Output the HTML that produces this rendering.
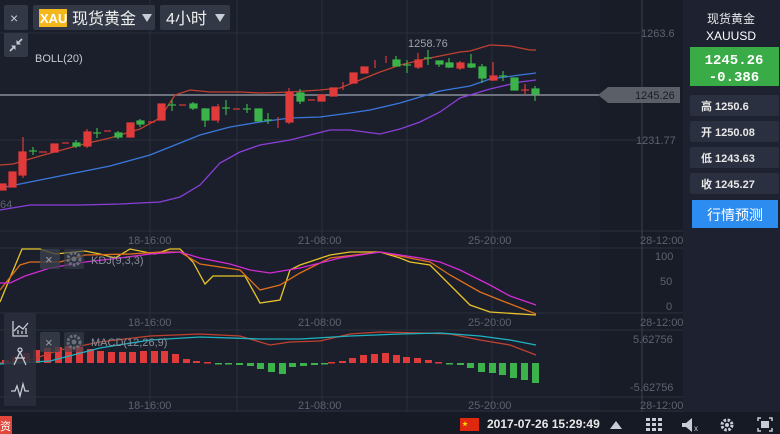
<!DOCTYPE html>
<html><head><meta charset="utf-8"><style>
*{margin:0;padding:0;box-sizing:border-box}
body{width:780px;height:434px;overflow:hidden;background:#1b1f2c;font-family:"Liberation Sans","Noto Sans CJK SC",sans-serif;position:relative}
.abs{position:absolute}
</style></head><body>
<svg class="abs" style="left:0;top:0" width="780" height="434">
<rect x="0" y="0" width="683" height="412" fill="#1b1f2c"/>
<rect x="600" y="0" width="83" height="412" fill="#181c27"/>
<rect x="683" y="0" width="97" height="412" fill="#1d2130"/>
<g stroke="#2a2f3c" stroke-width="1">
<line x1="150" y1="0" x2="150" y2="412"/><line x1="237" y1="0" x2="237" y2="412"/><line x1="322" y1="0" x2="322" y2="412"/><line x1="407" y1="0" x2="407" y2="412"/><line x1="492" y1="0" x2="492" y2="412"/>
<line x1="0" y1="33" x2="640" y2="33"/><line x1="0" y1="140" x2="640" y2="140"/>
<line x1="0" y1="231" x2="683" y2="231"/><line x1="0" y1="248" x2="683" y2="248"/>
<line x1="0" y1="313" x2="683" y2="313"/><line x1="0" y1="330" x2="683" y2="330"/>
<line x1="0" y1="397" x2="683" y2="397"/><line x1="0" y1="411" x2="683" y2="411"/>
</g>
<line x1="642" y1="0" x2="642" y2="412" stroke="#3a404e"/>
<line x1="0" y1="95" x2="605" y2="95" stroke="#8a8e96" stroke-width="1.5"/>
<polygon points="598,95 608,87 680,87 680,103 608,103" fill="#5b5f68"/>
<g font-size="11" fill="#5d6270" font-family="Liberation Sans">
<text x="641" y="37">1263.6</text><text x="636" y="144">1231.77</text>
<text x="655" y="260">100</text><text x="660" y="285">50</text><text x="666" y="310">0</text>
<text x="633" y="343">5.62756</text><text x="630" y="391">-5.62756</text>
<text x="128" y="244">18-16:00</text><text x="298" y="244">21-08:00</text><text x="468" y="244">25-20:00</text><text x="640" y="244">28-12:00</text>
<text x="128" y="326">18-16:00</text><text x="298" y="326">21-08:00</text><text x="468" y="326">25-20:00</text><text x="640" y="326">28-12:00</text>
<text x="128" y="409">18-16:00</text><text x="298" y="409">21-08:00</text><text x="468" y="409">25-20:00</text><text x="640" y="409">28-12:00</text>
<text x="0" y="208">64</text>
</g>
<text x="635" y="99" font-size="11" fill="#1a1d24">1245.26</text>
<text x="408" y="47" font-size="11" fill="#9ea2aa">1258.76</text>
<text x="35" y="62" font-size="11" fill="#c8cad0">BOLL(20)</text>
<polyline fill="none" stroke="#c0412f" stroke-width="1.3" points="0,165 13,164 40,156 80,145 110,138 140,129 160,118 175,95 190,90 210,92 240,92 260,93 290,92 320,90 340,88 360,80 380,72 400,65 430,58 460,52 470,51 490,45 510,46 530,50 536,50"/>
<polyline fill="none" stroke="#3a78dc" stroke-width="1.3" points="0,188 30,182 80,172 110,166 150,155 170,147 200,135 230,127 260,122 290,118 320,117 350,113 370,110 400,103 420,97 440,91 470,86 490,79 520,75 536,73"/>
<polyline fill="none" stroke="#8b3fd8" stroke-width="1.3" points="0,210 30,205 80,205 120,204 160,202 180,197 200,185 220,163 240,152 260,145 290,140 330,130 350,130 380,134 400,129 420,122 440,112 460,98 490,89 520,82 536,80"/>
<g stroke-width="1.2">
<g fill="#e03a3a" stroke="#e03a3a">
<rect x="0" y="184" width="6" height="6"/><rect x="9" y="172" width="7" height="15"/>
<line x1="23" y1="137" x2="23" y2="178"/><rect x="19" y="152" width="7" height="23"/>
<line x1="39" y1="152" x2="47" y2="152"/><rect x="51" y="144" width="7" height="8"/><line x1="62" y1="143" x2="69" y2="143"/>
<line x1="87" y1="129" x2="87" y2="148"/><rect x="84" y="132" width="7" height="14"/><line x1="104" y1="131" x2="111" y2="131"/><line x1="148" y1="122" x2="155" y2="122"/>
<rect x="127" y="123" width="7" height="14"/><rect x="158" y="104" width="7" height="16"/><line x1="179" y1="105" x2="186" y2="105"/>
<line x1="218" y1="104" x2="218" y2="123"/><rect x="212" y="107" width="7" height="13"/><line x1="233" y1="109" x2="240" y2="109"/>
<line x1="278" y1="117" x2="278" y2="128"/><line x1="289" y1="88" x2="289" y2="124"/><rect x="286" y="92" width="7" height="30"/>
<line x1="308" y1="100" x2="315" y2="100"/><rect x="318" y="95" width="7" height="6"/><rect x="330" y="88" width="7" height="8"/><line x1="343" y1="82" x2="343" y2="90"/>
<rect x="350" y="73" width="7" height="10"/><rect x="361" y="67" width="7" height="6"/><line x1="375" y1="60" x2="375" y2="68"/><line x1="386" y1="56" x2="386" y2="63"/>
<line x1="418" y1="53" x2="418" y2="69"/><rect x="415" y="60" width="7" height="7"/><line x1="460" y1="61" x2="460" y2="70"/><rect x="457" y="63" width="7" height="5"/>
<line x1="493" y1="62" x2="493" y2="81"/><rect x="490" y="76" width="7" height="4"/><line x1="525" y1="84" x2="525" y2="94"/><line x1="521" y1="90" x2="529" y2="90"/>
</g>
<g fill="#3cb34a" stroke="#3cb34a">
<line x1="33" y1="147" x2="33" y2="155"/><line x1="29" y1="151" x2="37" y2="151"/><line x1="76" y1="140" x2="76" y2="148"/><rect x="73" y="143" width="7" height="3"/>
<line x1="97" y1="128" x2="97" y2="138"/><line x1="93" y1="133" x2="101" y2="133"/><line x1="118" y1="131" x2="118" y2="139"/><rect x="115" y="133" width="7" height="4"/>
<line x1="140" y1="119" x2="140" y2="127"/><rect x="137" y="121" width="7" height="3"/><line x1="172" y1="100" x2="172" y2="111"/><line x1="168" y1="105" x2="176" y2="105"/>
<line x1="193" y1="102" x2="193" y2="110"/><rect x="190" y="104" width="7" height="4"/><line x1="205" y1="108" x2="205" y2="127"/><rect x="202" y="109" width="7" height="11"/>
<line x1="226" y1="100" x2="226" y2="115"/><line x1="222" y1="108" x2="230" y2="108"/><line x1="247" y1="104" x2="247" y2="113"/><line x1="243" y1="109" x2="251" y2="109"/>
<rect x="255" y="109" width="7" height="12"/><line x1="268" y1="113" x2="268" y2="124"/><line x1="264" y1="120" x2="272" y2="120"/>
<line x1="300" y1="89" x2="300" y2="104"/><rect x="297" y="93" width="7" height="8"/><rect x="393" y="60" width="7" height="6"/><line x1="396" y1="56" x2="396" y2="66"/>
<line x1="407" y1="60" x2="407" y2="73"/><line x1="403" y1="65" x2="411" y2="65"/><line x1="428" y1="50" x2="428" y2="65"/><line x1="424" y1="58" x2="432" y2="58"/>
<line x1="439" y1="61" x2="439" y2="67"/><rect x="436" y="61" width="7" height="3"/><line x1="449" y1="58" x2="449" y2="68"/><rect x="446" y="63" width="7" height="4"/>
<line x1="471" y1="54" x2="471" y2="68"/><rect x="468" y="64" width="7" height="3"/><line x1="482" y1="64" x2="482" y2="83"/><rect x="479" y="67" width="7" height="11"/>
<line x1="503" y1="71" x2="503" y2="81"/><line x1="499" y1="76" x2="507" y2="76"/><rect x="511" y="78" width="7" height="12"/><line x1="535" y1="86" x2="535" y2="101"/><rect x="532" y="89" width="7" height="5"/>
</g></g>
<polyline fill="none" stroke="#e8c32a" stroke-width="1.3" points="0,302 22,249 40,249 55,254 85,251 100,254 115,258 130,249 155,254 170,249 180,249 193,262 205,284 213,276 245,276 260,303 280,300 290,270 300,265 330,255 350,252 380,252 400,258 410,262 430,265 450,285 470,305 490,312 536,315"/>
<polyline fill="none" stroke="#e06f1c" stroke-width="1.3" points="0,290 20,265 30,262 60,262 85,255 130,254 160,252 180,252 200,264 240,270 260,290 280,285 300,273 330,258 380,252 410,258 430,262 450,275 480,292 500,300 536,314"/>
<polyline fill="none" stroke="#d42ad4" stroke-width="1.3" points="0,283 10,283 25,276 50,268 85,262 120,258 150,254 180,252 200,258 230,264 250,270 270,273 300,268 340,258 380,252 420,258 440,262 460,270 490,285 510,296 536,305"/>
<rect x="40" y="249" width="20" height="20" rx="2" fill="#3a3f4c" opacity=".8"/><text x="45" y="264" font-size="13" fill="#9aa0aa">×</text>
<rect x="64" y="249" width="20" height="20" rx="2" fill="#3a3f4c" opacity=".6"/>
<circle cx="74" cy="259" r="6" fill="none" stroke="#6a707c" stroke-width="3" stroke-dasharray="2.5 1.5"/><circle cx="74" cy="259" r="2.5" fill="#6a707c"/>
<text x="91" y="264" font-size="11" fill="#8a8f9a">KDJ(9,3,3)</text>
<g fill="#e03a3a">
<rect x="2" y="360" width="7" height="3"/><rect x="12" y="357" width="7" height="6"/><rect x="23" y="353" width="7" height="10"/><rect x="33" y="350" width="7" height="13"/><rect x="44" y="348" width="7" height="15"/><rect x="55" y="347" width="7" height="16"/><rect x="65" y="346" width="7" height="17"/><rect x="76" y="347" width="7" height="16"/><rect x="87" y="349" width="7" height="14"/><rect x="97" y="351" width="7" height="12"/><rect x="108" y="352" width="7" height="11"/><rect x="119" y="352" width="7" height="11"/><rect x="129" y="352" width="7" height="11"/><rect x="140" y="351" width="7" height="12"/><rect x="151" y="351" width="7" height="12"/><rect x="161" y="351" width="7" height="12"/><rect x="172" y="354" width="7" height="9"/><rect x="183" y="359" width="7" height="4"/><rect x="193" y="361" width="7" height="2"/><rect x="204" y="362" width="7" height="1.5"/>
<rect x="328" y="362" width="7" height="1.5"/><rect x="339" y="361" width="7" height="2"/><rect x="349" y="358" width="7" height="5"/><rect x="360" y="355" width="7" height="8"/><rect x="371" y="354" width="7" height="9"/><rect x="382" y="353" width="7" height="10"/><rect x="393" y="355" width="7" height="8"/><rect x="403" y="357" width="7" height="6"/><rect x="414" y="358" width="7" height="5"/><rect x="425" y="360" width="7" height="3"/><rect x="435" y="362" width="7" height="1.5"/>
</g>
<g fill="#3cb34a">
<rect x="215" y="363" width="7" height="1.5"/><rect x="225" y="363" width="7" height="1.5"/><rect x="236" y="363" width="7" height="2"/><rect x="247" y="363" width="7" height="3"/><rect x="257" y="363" width="7" height="6"/><rect x="268" y="363" width="7" height="9"/><rect x="279" y="363" width="7" height="11"/><rect x="289" y="363" width="7" height="4"/><rect x="300" y="363" width="7" height="3"/><rect x="311" y="363" width="7" height="2"/><rect x="321" y="363" width="7" height="1.5"/>
<rect x="446" y="363" width="7" height="1.5"/><rect x="457" y="363" width="7" height="2"/><rect x="467" y="363" width="7" height="5"/><rect x="478" y="363" width="7" height="9"/><rect x="489" y="363" width="7" height="10"/><rect x="499" y="363" width="7" height="12"/><rect x="510" y="363" width="7" height="15"/><rect x="521" y="363" width="7" height="17"/><rect x="532" y="363" width="7" height="20"/>
</g>
<polyline fill="none" stroke="#c0412f" stroke-width="1.3" points="0,363 30,360 60,350 100,342 150,336 200,334 240,336 270,345 290,342 320,341 350,334 380,332 420,333 450,334 480,340 510,345 536,355"/>
<polyline fill="none" stroke="#1fb3c2" stroke-width="1.3" points="0,364 50,361 100,348 150,340 200,337 260,339 300,339 350,336 400,334 440,333 480,336 510,340 536,345"/>
<rect x="40" y="332" width="20" height="20" rx="2" fill="#3a3f4c" opacity=".8"/><text x="45" y="347" font-size="13" fill="#9aa0aa">×</text>
<rect x="64" y="332" width="20" height="20" rx="2" fill="#3a3f4c" opacity=".6"/>
<circle cx="74" cy="342" r="6" fill="none" stroke="#6a707c" stroke-width="3" stroke-dasharray="2.5 1.5"/><circle cx="74" cy="342" r="2.5" fill="#6a707c"/>
<text x="91" y="346" font-size="11" fill="#8a8f9a">MACD(12,26,9)</text>
<rect x="4" y="313" width="32" height="93" rx="2" fill="#2a2f3d" opacity=".85"/>
<g fill="none" stroke="#c8ccd4" stroke-width="1.3">
<polyline points="13,321 13,336 28,336"/><polyline points="14,331 19,326 23,329 28,323"/><line x1="18" y1="334" x2="18" y2="330"/><line x1="22" y1="334" x2="22" y2="331"/><line x1="26" y1="334" x2="26" y2="328"/>
<circle cx="20" cy="350" r="2"/><polyline points="14,365 20,352 26,365"/><line x1="15" y1="358" x2="25" y2="358"/>
<polyline points="11,391 15,391 17,386 20,396 23,384 25,391 29,391"/>
</g>
<rect x="0" y="412" width="780" height="22" fill="#161a24"/>
<rect x="0" y="416" width="12" height="18" fill="#e0473a"/><text x="0" y="430" font-size="11" fill="#fff">资</text>
<rect x="460" y="418" width="19" height="13" fill="#de2910"/><text x="462" y="426" font-size="6" fill="#ffde00">★</text>
<text x="487" y="428" font-size="12" fill="#e8e8e8" font-weight="bold">2017-07-26 15:29:49</text>
<polygon points="610,429 616,421 622,429" fill="#c8ccd4"/>
<g fill="#c8ccd4"><rect x="646" y="418" width="4" height="3"/><rect x="652" y="418" width="4" height="3"/><rect x="658" y="418" width="4" height="3"/><rect x="646" y="423" width="4" height="3"/><rect x="652" y="423" width="4" height="3"/><rect x="658" y="423" width="4" height="3"/><rect x="646" y="428" width="4" height="3"/><rect x="652" y="428" width="4" height="3"/><rect x="658" y="428" width="4" height="3"/>
<polygon points="682,423 686,423 692,418 692,432 686,427 682,427"/></g>
<text x="694" y="431" font-size="8" fill="#c8ccd4">x</text>
<circle cx="727" cy="425" r="5" fill="none" stroke="#c8ccd4" stroke-width="3" stroke-dasharray="2.5 1.5"/><circle cx="727" cy="425" r="2" fill="#c8ccd4"/>
<g fill="none" stroke="#c8ccd4" stroke-width="1.5"><polyline points="758,421 758,418 761,418"/><polyline points="769,418 772,418 772,421"/><polyline points="772,428 772,431 769,431"/><polyline points="761,431 758,431 758,428"/></g>
<rect x="761" y="421" width="8" height="7" fill="#c8ccd4"/>
<rect x="4" y="5" width="24" height="25" rx="2" fill="#333846"/><text x="10" y="23" font-size="14" fill="#c8ccd4">×</text>
<rect x="4" y="33" width="24" height="24" rx="2" fill="#333846"/>
<g stroke="#c8ccd4" stroke-width="1.6"><line x1="10" y1="51" x2="14" y2="47"/><line x1="22" y1="39" x2="18" y2="43"/></g>
<polygon points="15.5,45.5 15.5,50 11,45.5" fill="#c8ccd4"/><polygon points="16.5,44.5 16.5,40 21,44.5" fill="#c8ccd4"/>
<rect x="33" y="5" width="122" height="25" rx="2" fill="#333846"/>
<rect x="39" y="9" width="28" height="18" fill="#f5b81c"/><text x="40" y="23" font-size="13" fill="#fff" font-weight="bold">XAU</text>
<text x="72" y="24" font-size="16" fill="#f0f0f0">现货黄金</text><polygon points="142,14 152,14 147,22" fill="#c8ccd4"/>
<rect x="160" y="5" width="70" height="25" rx="2" fill="#333846"/>
<text x="166" y="24" font-size="16" fill="#f0f0f0">4小时</text><polygon points="215,14 225,14 220,22" fill="#c8ccd4"/>
<text x="731" y="23" font-size="12" fill="#e8e8e8" text-anchor="middle">现货黄金</text>
<text x="731" y="40" font-size="12" fill="#fff" text-anchor="middle">XAUUSD</text>
<rect x="690" y="47" width="89" height="39" fill="#3aac47"/>
<text x="734" y="64" font-size="14" fill="#fff" text-anchor="middle" font-weight="bold" font-family="Liberation Mono">1245.26</text>
<text x="734" y="81" font-size="14" fill="#fff" text-anchor="middle" font-weight="bold" font-family="Liberation Mono">-0.386</text>
<rect x="690" y="95" width="89" height="21" rx="2" fill="#2b3040"/><rect x="690" y="121" width="89" height="21" rx="2" fill="#2b3040"/><rect x="690" y="147" width="89" height="21" rx="2" fill="#2b3040"/><rect x="690" y="173" width="89" height="21" rx="2" fill="#2b3040"/>
<g font-size="11" fill="#e8e8e8" font-weight="bold"><text x="701" y="110">高 1250.6</text><text x="701" y="136">开 1250.08</text><text x="701" y="162">低 1243.63</text><text x="701" y="188">收 1245.27</text></g>
<rect x="692" y="200" width="86" height="28" fill="#2d8cf0"/>
<text x="735" y="220" font-size="14" fill="#fff" text-anchor="middle">行情预测</text>
</svg>
</body></html>
